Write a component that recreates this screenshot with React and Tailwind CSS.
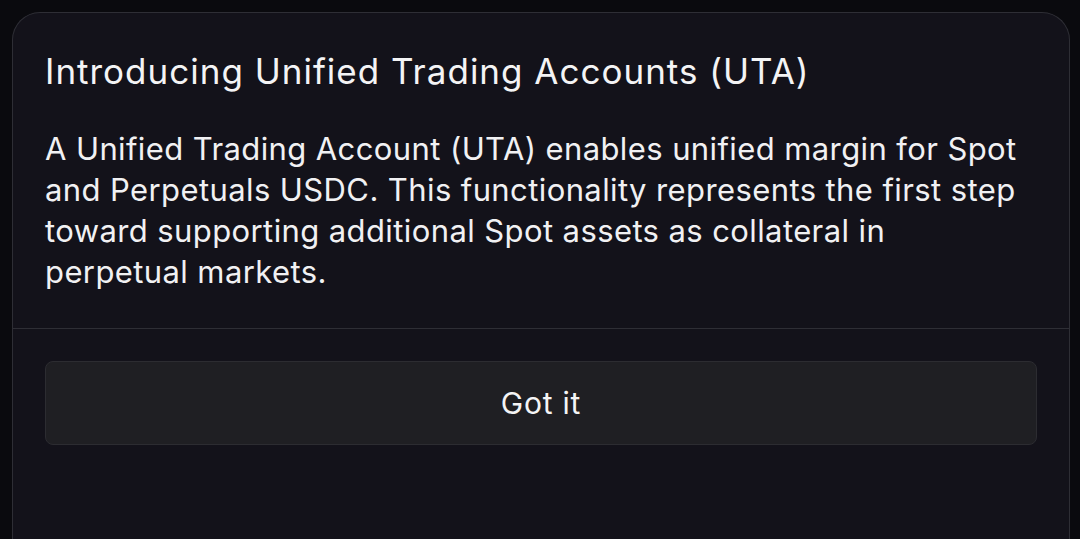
import React from "react";

function App() {
  return (
    <div className="w-[1080px] h-[539px] overflow-hidden bg-[#0a0a0e] pt-[12px] pl-[12px] pr-[10px]" style={{ fontFamily: "Inter, 'Noto Sans', sans-serif" }}>
      <div className="h-[600px] rounded-t-[28px] border border-b-0 border-[#2e2e35] bg-[#13121a]">
        <div className="px-[32px] pt-[38px]">
          <h1 className="text-[35px] leading-[41px] tracking-[1px] font-normal text-[#f4f4f5]">
            Introducing Unified Trading Accounts (UTA)
          </h1>
          <p className="mt-[36px] w-[985px] text-[31px] leading-[41px] tracking-[0.4px] text-[#f1f1f3]">
            A Unified Trading Account (UTA) enables unified margin for Spot and Perpetuals USDC. This functionality represents the first step toward supporting additional Spot assets as collateral in perpetual markets.
          </p>
        </div>
        <div className="mt-[36px] border-t border-[#2e2e35]" />
        <div className="px-[32px] pt-[32px]">
          <button className="w-full h-[84px] rounded-[8px] border border-[#2c2c31] bg-[#1f1f23] text-[30px] tracking-[0.8px] text-[#f4f4f5]">
            Got it
          </button>
        </div>
      </div>
    </div>
  );
}

export default App;
